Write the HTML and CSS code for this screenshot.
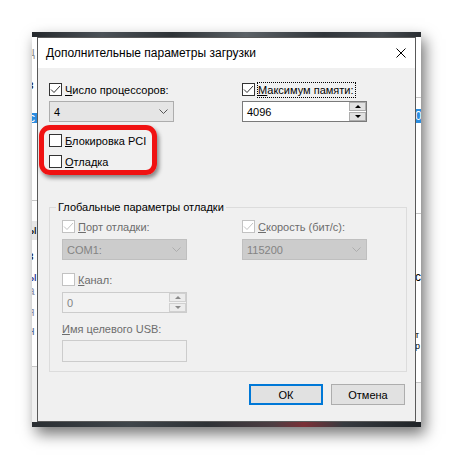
FILE: index.html
```html
<!DOCTYPE html>
<html lang="ru">
<head>
    <meta charset="UTF-8">
    <title>Дополнительные параметры загрузки</title>
    <link rel="stylesheet" href="styles.css">
</head>
<body>
<div class="desk">
    <div class="backwin">
        <div class="wall"></div>
        <div class="backbody">
            <div class="strip strip-left">
                <div class="ls-title">ц</div>
                <div class="ls-gap1"></div>
                <div class="ls-row">з</div>
                <div class="ls-gap2"></div>
                <div class="ls-sel">с</div>
                <div class="ls-gap3"></div>
                <div class="rule"></div>
                <div class="ls-gap4"></div>
                <div class="ls-band">ы</div>
                <div class="ls-gap5"></div>
                <div class="ls-row">з</div>
                <div class="ls-gap6"></div>
                <div class="ls-row ls-blue">ы</div>
                <div class="ls-row ls-grey">а</div>
                <div class="ls-gap6"></div>
                <div class="ls-row ls-grey">я</div>
                <div class="ls-gap7"></div>
                <div class="ls-row ls-slate">н</div>
                <div class="ls-gap8"></div>
                <div class="rule"></div>
                <div class="strip-rest"></div>
            </div>
            <div class="strip strip-right">
                <div class="rs-gap1"></div>
                <div class="rule"></div>
                <div class="rs-gap2"></div>
                <div class="rs-sel">0</div>
                <div class="rs-gap3"></div>
                <div class="rule"></div>
                <div class="rs-gap4"></div>
                <div class="rs-row">с</div>
                <div class="rs-gap5"></div>
                <div class="rs-row rs-small">т</div>
                <div class="rs-row rs-small">р</div>
                <div class="rs-gap6"></div>
                <div class="rule"></div>
                <div class="strip-rest"></div>
            </div>
        </div>
        <div class="wall wall-bottom"></div>
    </div>

    <div class="dialog">
        <div class="titlebar">
            <span class="title">Дополнительные параметры загрузки</span>
            <svg class="close" viewBox="0 0 10 10"><path d="M0.5 0.5 L9.5 9.5 M9.5 0.5 L0.5 9.5" stroke="#000" stroke-width="1" fill="none"/></svg>
        </div>

        <div class="client">
            <div class="pair">
                <div class="field">
                    <label class="check">
                        <span class="box"><svg viewBox="0 0 11 11"><polyline points="1,5.5 4,8.5 10,2" stroke="#333" stroke-width="1" fill="none"/></svg></span>
                        <span><u>Ч</u>исло процессоров:</span>
                    </label>
                    <div class="combo">
                        <span>4</span>
                        <svg class="chev" viewBox="0 0 9 5"><polyline points="0.5,0.5 4.5,4.5 8.5,0.5" stroke="#555" stroke-width="1" fill="none"/></svg>
                    </div>
                </div>
                <div class="field">
                    <label class="check">
                        <span class="box"><svg viewBox="0 0 11 11"><polyline points="1,5.5 4,8.5 10,2" stroke="#333" stroke-width="1" fill="none"/></svg></span>
                        <span class="focus"><u>М</u>аксимум памяти:</span>
                    </label>
                    <div class="spin">
                        <span class="spin-text">4096</span>
                        <span class="spin-btns">
                            <span class="spin-btn up"></span>
                            <span class="spin-btn down"></span>
                        </span>
                    </div>
                </div>
            </div>

            <div class="marked">
                <label class="check">
                    <span class="box"></span>
                    <span><u>Б</u>локировка PCI</span>
                </label>
                <label class="check">
                    <span class="box"></span>
                    <span><u>О</u>тладка</span>
                </label>
                <div class="highlight"></div>
            </div>

            <fieldset class="group">
                <legend class="group-title">Глобальные параметры отладки</legend>
                <div class="pair">
                    <div class="field">
                        <label class="check off">
                            <span class="box"><svg viewBox="0 0 11 11"><polyline points="1,5.5 4,8.5 10,2" stroke="#c2c2c2" stroke-width="1" fill="none"/></svg></span>
                            <span><u>П</u>орт отладки:</span>
                        </label>
                        <div class="combo off">
                            <span>COM1:</span>
                            <svg class="chev" viewBox="0 0 9 5"><polyline points="0.5,0.5 4.5,4.5 8.5,0.5" stroke="#adadad" stroke-width="1" fill="none"/></svg>
                        </div>
                    </div>
                    <div class="field">
                        <label class="check off">
                            <span class="box"><svg viewBox="0 0 11 11"><polyline points="1,5.5 4,8.5 10,2" stroke="#c2c2c2" stroke-width="1" fill="none"/></svg></span>
                            <span><u>С</u>корость (бит/с):</span>
                        </label>
                        <div class="combo off">
                            <span>115200</span>
                            <svg class="chev" viewBox="0 0 9 5"><polyline points="0.5,0.5 4.5,4.5 8.5,0.5" stroke="#adadad" stroke-width="1" fill="none"/></svg>
                        </div>
                    </div>
                </div>

                <div class="field channel">
                    <label class="check off">
                        <span class="box"></span>
                        <span><u>К</u>анал:</span>
                    </label>
                    <div class="spin off">
                        <span class="spin-text">0</span>
                        <span class="spin-btns">
                            <span class="spin-btn up"></span>
                            <span class="spin-btn down"></span>
                        </span>
                    </div>
                </div>

                <div class="field usb">
                    <div class="caption off"><u>И</u>мя целевого USB:</div>
                    <div class="textbox off"></div>
                </div>
            </fieldset>

            <div class="buttons">
                <button class="btn default">ОК</button>
                <button class="btn">Отмена</button>
            </div>
        </div>
    </div>
</div>
</body>
</html>
```
FILE: styles.css
```css
body {
    margin: 0;
    background-color: white;
    font-family: "Liberation Sans", Arial, sans-serif;
    font-size: 11px;
    color: #000;
}

.desk {
    position: relative;
    width: 453px;
    height: 459px;
    overflow: hidden;
}

/* window behind the dialog */
.backwin {
    position: absolute;
    left: 32px;
    top: 32px;
    width: 389px;
    height: 395px;
    display: flex;
    flex-direction: column;
    background-color: white;
    box-shadow: 4px 7px 14px rgba(0, 0, 0, 0.55);
}

.wall {
    height: 5px;
    flex: none;
    background: linear-gradient(90deg, #24282c, #4b5157 18%, #2d3236 36%, #5b6166 55%, #30353a 75%, #464b50 90%, #2a2e32);
}

.wall-bottom {
    background: linear-gradient(90deg, #2a2e32, #3f454a 25%, #2e3236 45%, #4c3d42 62%, #7b2f36 70%, #363a3f 80%, #1f2327);
}

.backbody {
    flex: 1;
    display: flex;
    justify-content: space-between;
}

.strip {
    display: flex;
    flex-direction: column;
    overflow: hidden;
    white-space: nowrap;
    font-size: 12px;
}

.strip > div {
    flex: none;
    overflow: hidden;
}

.strip-left {
    width: 5px;
}

.strip-right {
    width: 6px;
}

.rule {
    height: 1px;
    background-color: #c6c6c6;
}

.strip-rest {
    flex: 1 !important;
    background-color: #f0f0f0;
}

.ls-title {
    height: 31px;
    line-height: 31px;
    color: #8a8a8a;
    text-indent: -4px;
}

.ls-gap1 { height: 10px; }
.ls-gap2 { height: 21px; }
.ls-gap3 { height: 77px; }
.ls-gap4 { height: 20px; }
.ls-gap5 { height: 9px; }
.ls-gap6 { height: 7px; }
.ls-gap7 { height: 5px; }
.ls-gap8 { height: 28px; }

.ls-row {
    height: 14px;
    line-height: 14px;
    text-indent: -4px;
}

.ls-blue { color: #1c2b8a; }
.ls-grey { color: #8a8fa8; }
.ls-slate { color: #5c6e9a; }

.ls-sel {
    height: 10px;
    line-height: 10px;
    background-color: #2b8de0;
    color: white;
    text-indent: -3px;
}

.ls-band {
    height: 19px;
    line-height: 19px;
    background-color: #e6e6e6;
    text-indent: -4px;
}

.rs-gap1 { height: 60px; }
.rs-gap2 { height: 11px; }
.rs-gap3 { height: 90px; }
.rs-gap4 { height: 56px; }
.rs-gap5 { height: 46px; }
.rs-gap6 { height: 30px; }

.rs-sel {
    height: 14px;
    line-height: 14px;
    background-color: #2b8de0;
    color: white;
}

.rs-row {
    height: 14px;
    line-height: 14px;
}

.rs-small {
    height: 11px;
    line-height: 11px;
    font-size: 9px;
}

/* dialog */
.dialog {
    position: absolute;
    left: 37px;
    top: 37px;
    width: 379px;
    height: 385px;
    box-sizing: border-box;
    border: 1px solid #595959;
    background-color: #f0f0f0;
    display: flex;
    flex-direction: column;
}

.titlebar {
    height: 30px;
    flex: none;
    background-color: white;
    display: flex;
    align-items: center;
    padding: 0 9px 0 8px;
    font-size: 12px;
}

.title {
    flex: 1;
}

.close {
    width: 10px;
    height: 10px;
}

.client {
    flex: 1;
    display: flex;
    flex-direction: column;
    padding: 13px 8px 0 11px;
}

.pair {
    display: grid;
    grid-template-columns: 125px 125px;
    column-gap: 68px;
}

.field {
    display: flex;
    flex-direction: column;
}

.check {
    display: flex;
    align-items: center;
    gap: 3px;
    height: 17px;
    white-space: nowrap;
}

.check u,
.caption u {
    text-underline-offset: 1px;
}

.box {
    flex: none;
    width: 13px;
    height: 13px;
    box-sizing: border-box;
    border: 1px solid #333;
    background-color: white;
    display: flex;
    align-items: center;
    justify-content: center;
}

.box svg {
    width: 11px;
    height: 11px;
}

.check.off {
    color: #6d6d6d;
}

.check.off .box {
    border-color: #c2c2c2;
}

.focus {
    outline: 1px dotted #000;
    outline-offset: 0;
    padding: 1px 1px 1px 0;
}

.combo {
    height: 21px;
    margin-top: 3px;
    box-sizing: border-box;
    border: 1px solid #adadad;
    background-color: #e5e5e5;
    display: flex;
    align-items: center;
    justify-content: space-between;
    padding: 0 5px 0 4px;
}

.chev {
    width: 9px;
    height: 5px;
}

.combo.off {
    background-color: #cccccc;
    border-color: #bfbfbf;
    color: #838383;
}

.spin {
    height: 21px;
    margin-top: 3px;
    box-sizing: border-box;
    border: 1px solid #7a7a7a;
    background-color: white;
    display: flex;
    align-items: center;
    padding-left: 4px;
}

.spin-text {
    flex: 1;
}

.spin-btns {
    align-self: stretch;
    width: 17px;
    display: flex;
    flex-direction: column;
    gap: 1px;
    padding: 0 0 0 1px;
}

.spin-btn {
    flex: 1;
    border: 1px solid #adadad;
    background-color: #e1e1e1;
    display: flex;
    align-items: center;
    justify-content: center;
}

.spin-btn::before {
    content: '';
    border-left: 3px solid transparent;
    border-right: 3px solid transparent;
}

.up::before {
    border-bottom: 3px solid #000;
}

.down::before {
    border-top: 3px solid #000;
}

.spin.off {
    border-color: #cccccc;
    background-color: #f2f2f2;
    color: #838383;
}

.spin.off .spin-btn {
    border-color: #d0d0d0;
    background-color: #ececec;
}

.spin.off .up::before {
    border-bottom-color: #8a8a8a;
}

.spin.off .down::before {
    border-top-color: #8a8a8a;
}

/* red annotation frame */
.marked {
    position: relative;
    margin-top: 10px;
    display: flex;
    flex-direction: column;
    gap: 4px;
}

.highlight {
    position: absolute;
    left: -10px;
    top: -7px;
    width: 118px;
    height: 50px;
    box-sizing: border-box;
    border: 5px solid #f01212;
    border-radius: 11px;
    box-shadow: 2px 3px 4px rgba(0, 0, 0, 0.45);
    pointer-events: none;
}

.group {
    margin: 30px 0 0;
    padding: 3px 8px 9px 12px;
    border: 1px solid #dcdcdc;
    min-width: 0;
}

.group-title {
    padding: 0 2px;
    margin-left: -6px;
    line-height: 15px;
}

.group .pair {
    column-gap: 55px;
}

.group .combo {
    margin-top: 4px;
}

.channel {
    margin-top: 11px;
}

.channel .spin {
    margin-top: 4px;
    width: 125px;
}

.usb {
    margin-top: 8px;
}

.caption {
    height: 17px;
    line-height: 17px;
    white-space: nowrap;
}

.caption.off {
    color: #6d6d6d;
}

.textbox {
    width: 125px;
    height: 22px;
    margin-top: 2px;
    box-sizing: border-box;
    border: 1px solid #cccccc;
    background-color: #f0f0f0;
}

.buttons {
    display: flex;
    justify-content: flex-end;
    gap: 8px;
    margin-top: 12px;
    margin-right: 2px;
}

.btn {
    width: 74px;
    height: 21px;
    padding: 0;
    box-sizing: border-box;
    border: 1px solid #adadad;
    background-color: #e1e1e1;
    font-family: inherit;
    font-size: 11px;
    color: #000;
}

.btn.default {
    border: 2px solid #0078d7;
}
```
